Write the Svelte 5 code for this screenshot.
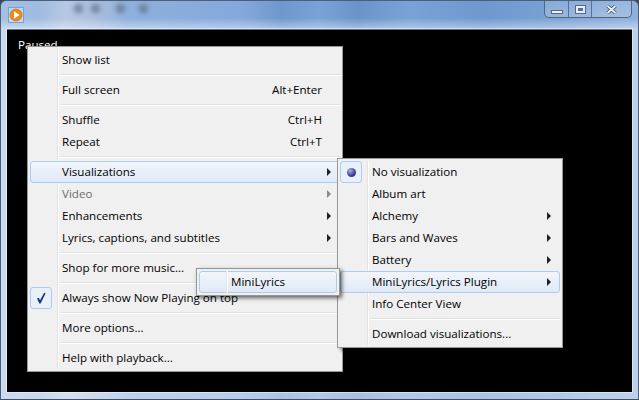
<script lang="ts">
    type Item = {
        label?: string;
        shortcut?: string;
        sub?: boolean;
        sep?: boolean;
        disabled?: boolean;
        hot?: boolean;
        check?: boolean;
        radio?: boolean;
    };

    const mainMenu: Item[] = [
        { label: 'Show list' },
        { sep: true },
        { label: 'Full screen', shortcut: 'Alt+Enter' },
        { sep: true },
        { label: 'Shuffle', shortcut: 'Ctrl+H' },
        { label: 'Repeat', shortcut: 'Ctrl+T' },
        { sep: true },
        { label: 'Visualizations', sub: true, hot: true },
        { label: 'Video', sub: true, disabled: true },
        { label: 'Enhancements', sub: true },
        { label: 'Lyrics, captions, and subtitles', sub: true },
        { sep: true },
        { label: 'Shop for more music...' },
        { sep: true },
        { label: 'Always show Now Playing on top', check: true },
        { sep: true },
        { label: 'More options...' },
        { sep: true },
        { label: 'Help with playback...' }
    ];

    const vizMenu: Item[] = [
        { label: 'No visualization', radio: true },
        { label: 'Album art' },
        { label: 'Alchemy', sub: true },
        { label: 'Bars and Waves', sub: true },
        { label: 'Battery', sub: true },
        { label: 'MiniLyrics/Lyrics Plugin', sub: true, hot: true },
        { label: 'Info Center View' },
        { sep: true },
        { label: 'Download visualizations...' }
    ];

    const lyricsMenu: Item[] = [{ label: 'MiniLyrics', hot: true }];
</script>

{#snippet menu(items: Item[], cls: string)}
    <div class="menu {cls}">
        {#each items as item}
            {#if item.sep}
                <div class="sep"></div>
            {:else}
                <div class="row" class:hot={item.hot} class:disabled={item.disabled}>
                    <div class="mark" class:on={item.check || item.radio}>
                        {#if item.check}
                            <svg width="12" height="12" viewBox="0 0 12 12">
                                <path d="M2 6.5 L3.8 5.8 L5 8.2 L9.2 0.8 L10.6 1.2 L5.6 11.4 L4.4 11.4 Z" fill="#1f2f86" />
                            </svg>
                        {:else if item.radio}
                            <span class="dot"></span>
                        {/if}
                    </div>
                    <span class="label">{item.label}</span>
                    {#if item.shortcut}
                        <span class="shortcut">{item.shortcut}</span>
                    {/if}
                    {#if item.sub}
                        <span class="arrow"></span>
                    {/if}
                </div>
            {/if}
        {/each}
    </div>
{/snippet}

<div class="window">
    <!-- blurred desktop showing through the glass -->
    <div class="smudge one"></div>
    <div class="smudge two"></div>
    <div class="smudge three"></div>
    <div class="smudge four"></div>

    <div class="titlebar">
        <div class="app-icon">
            <svg width="14" height="14" viewBox="0 0 14 14">
                <circle cx="7" cy="7" r="6" fill="#f08a12" stroke="#c96a08" stroke-width="0.6" />
                <path d="M5 3.2 L10.6 7 L5 10.8 Z" fill="#fff" />
            </svg>
        </div>
        <div class="controls">
            <div class="ctl min"><span class="min-glyph"></span></div>
            <div class="ctl max"><span class="max-glyph"></span></div>
            <div class="ctl close">
                <svg width="11" height="9" viewBox="0 0 11 9">
                    <path d="M1.5 1 L9.5 8 M9.5 1 L1.5 8" stroke="#3b4a5c" stroke-width="3.4" />
                    <path d="M1.5 1 L9.5 8 M9.5 1 L1.5 8" stroke="#eef1f5" stroke-width="1.8" />
                </svg>
            </div>
        </div>
    </div>

    <div class="client">
        <div class="status">Paused</div>
    </div>

    {@render menu(mainMenu, 'main')}
    {@render menu(vizMenu, 'viz')}
    {@render menu(lyricsMenu, 'lyrics')}
</div>

<style>
    :global(body) {
        margin: 0;
        background: #39465a;
    }

    .window {
        position: relative;
        width: 639px;
        height: 400px;
        box-sizing: border-box;
        display: flex;
        flex-direction: column;
        overflow: hidden;
        border-radius: 6px 6px 0 0;
        border: 1px solid #4d5f78;
        border-bottom-color: #3f4f66;
        background:
            linear-gradient(180deg, rgba(255, 255, 255, 0) 0, rgba(255, 255, 255, 0) 17px, rgba(255, 255, 255, 0.42) 28px),
            linear-gradient(90deg, #a3bfe3 0, #a0bbe0 6%, #b6c8e3 10%, #a9bedd 15%, #8fb0dc 20%, #84a8dc 38%, #6f97cc 44%, #7aa2d6 50%, #6a94c8 56%, #7aa2d6 64%, #6f98cf 76%, #7ba2d4 88%, #8fb0dc 100%);
        font-family: "Open Sans", "Liberation Sans", sans-serif;
        font-size: 11.6px;
        color: #000;
    }

    .smudge {
        position: absolute;
        top: 3px;
        width: 9px;
        height: 9px;
        background: #5a6a7c;
        border-radius: 50%;
        filter: blur(2.5px);
        opacity: 0.7;
    }
    .smudge.one { left: 73px; }
    .smudge.two { left: 90px; }
    .smudge.three { left: 115px; }
    .smudge.four { left: 138px; }

    .titlebar {
        height: 28px;
        flex: none;
        display: flex;
        align-items: flex-start;
        justify-content: space-between;
        position: relative;
    }

    .app-icon {
        width: 14px;
        height: 14px;
        margin: 7px 0 0 8px;
        outline: 1px solid #6fa3da;
        background: rgba(255, 255, 255, 0.35);
    }
    .app-icon svg { display: block; }

    .controls {
        display: flex;
        height: 16px;
        margin-right: 6px;
        border: 1px solid #51667f;
        border-top: 0;
        border-radius: 0 0 5px 5px;
        background: linear-gradient(180deg, rgba(255, 255, 255, 0.1), rgba(255, 255, 255, 0.22));
    }

    .ctl {
        display: flex;
        align-items: center;
        justify-content: center;
        border-right: 1px solid #5a7090;
    }
    .ctl.close { border-right: 0; }
    .ctl.min { width: 23px; }
    .ctl.max { width: 22px; }
    .ctl.close { width: 39px; }

    .min-glyph {
        width: 10px;
        height: 2px;
        margin-top: 6px;
        background: #eef1f5;
        border: 1px solid #5a6a7e;
    }
    .max-glyph {
        width: 5px;
        height: 3px;
        border: 2px solid #e8edf3;
        background: #4f6ea8;
        outline: 1px solid #5a6a7e;
    }

    .client {
        flex: 1;
        margin: 0 6px 7px;
        background: #000;
        border-top: 1px solid #5f6f85;
        box-shadow: 0 0 0 1px rgba(255, 255, 255, 0.45);
        padding: 7px 11px;
    }

    .status {
        color: #fff;
        line-height: 16px;
    }

    .menu {
        position: absolute;
        box-sizing: border-box;
        padding: 2px;
        background: #f0f0f0;
        border: 1px solid #979797;
        box-shadow: 3px 3px 3px rgba(0, 0, 0, 0.35);
    }
    .menu.main { left: 26px; top: 45px; width: 316px; }
    .menu.viz { left: 336px; top: 157px; width: 226px; }
    .menu.lyrics { left: 195px; top: 267px; width: 144px; box-shadow: 2px 2px 4px rgba(0, 0, 0, 0.6); }

    .row {
        position: relative;
        display: flex;
        align-items: center;
        height: 22px;
        line-height: 20px;
        box-sizing: border-box;
        border: 1px solid transparent;
        border-radius: 3px;
    }
    .row.hot {
        border-color: #aeccf0;
        background: linear-gradient(180deg, #f2f6fb, #dfe9f6);
    }
    .row.disabled { color: #6d6d6d; }

    .mark {
        width: 22px;
        height: 22px;
        margin: -1px 10px -1px -1px;
        flex: none;
        display: flex;
        align-items: center;
        justify-content: center;
        box-sizing: border-box;
        border: 1px solid transparent;
        border-radius: 3px;
    }
    .mark.on {
        border-color: #aeccf0;
        background: #e8f0fa;
    }

    .menu::before {
        content: "";
        position: absolute;
        top: 2px;
        bottom: 2px;
        left: 29px;
        border-left: 1px solid #e2e3e3;
        border-right: 1px solid #fff;
    }
    .menu.lyrics::before { z-index: 1; }

    .label {
        flex: 1;
        white-space: nowrap;
        position: relative;
    }
    .shortcut { margin-right: 17px; }

    .arrow {
        width: 0;
        height: 0;
        margin-right: 8px;
        border-left: 4px solid #202020;
        border-top: 4px solid transparent;
        border-bottom: 4px solid transparent;
    }
    .disabled .arrow { border-left-color: #8a8a8a; }

    .dot {
        width: 9px;
        height: 9px;
        border-radius: 50%;
        background: radial-gradient(circle at 35% 30%, #a9aee6, #3a3f95 60%, #20246a);
    }

    .sep {
        height: 8px;
        box-sizing: border-box;
        margin-left: 30px;
        padding-top: 3px;
        position: relative;
    }
    .sep::after {
        content: "";
        display: block;
        border-top: 1px solid #e0e0e0;
        border-bottom: 1px solid #fff;
    }
</style>
